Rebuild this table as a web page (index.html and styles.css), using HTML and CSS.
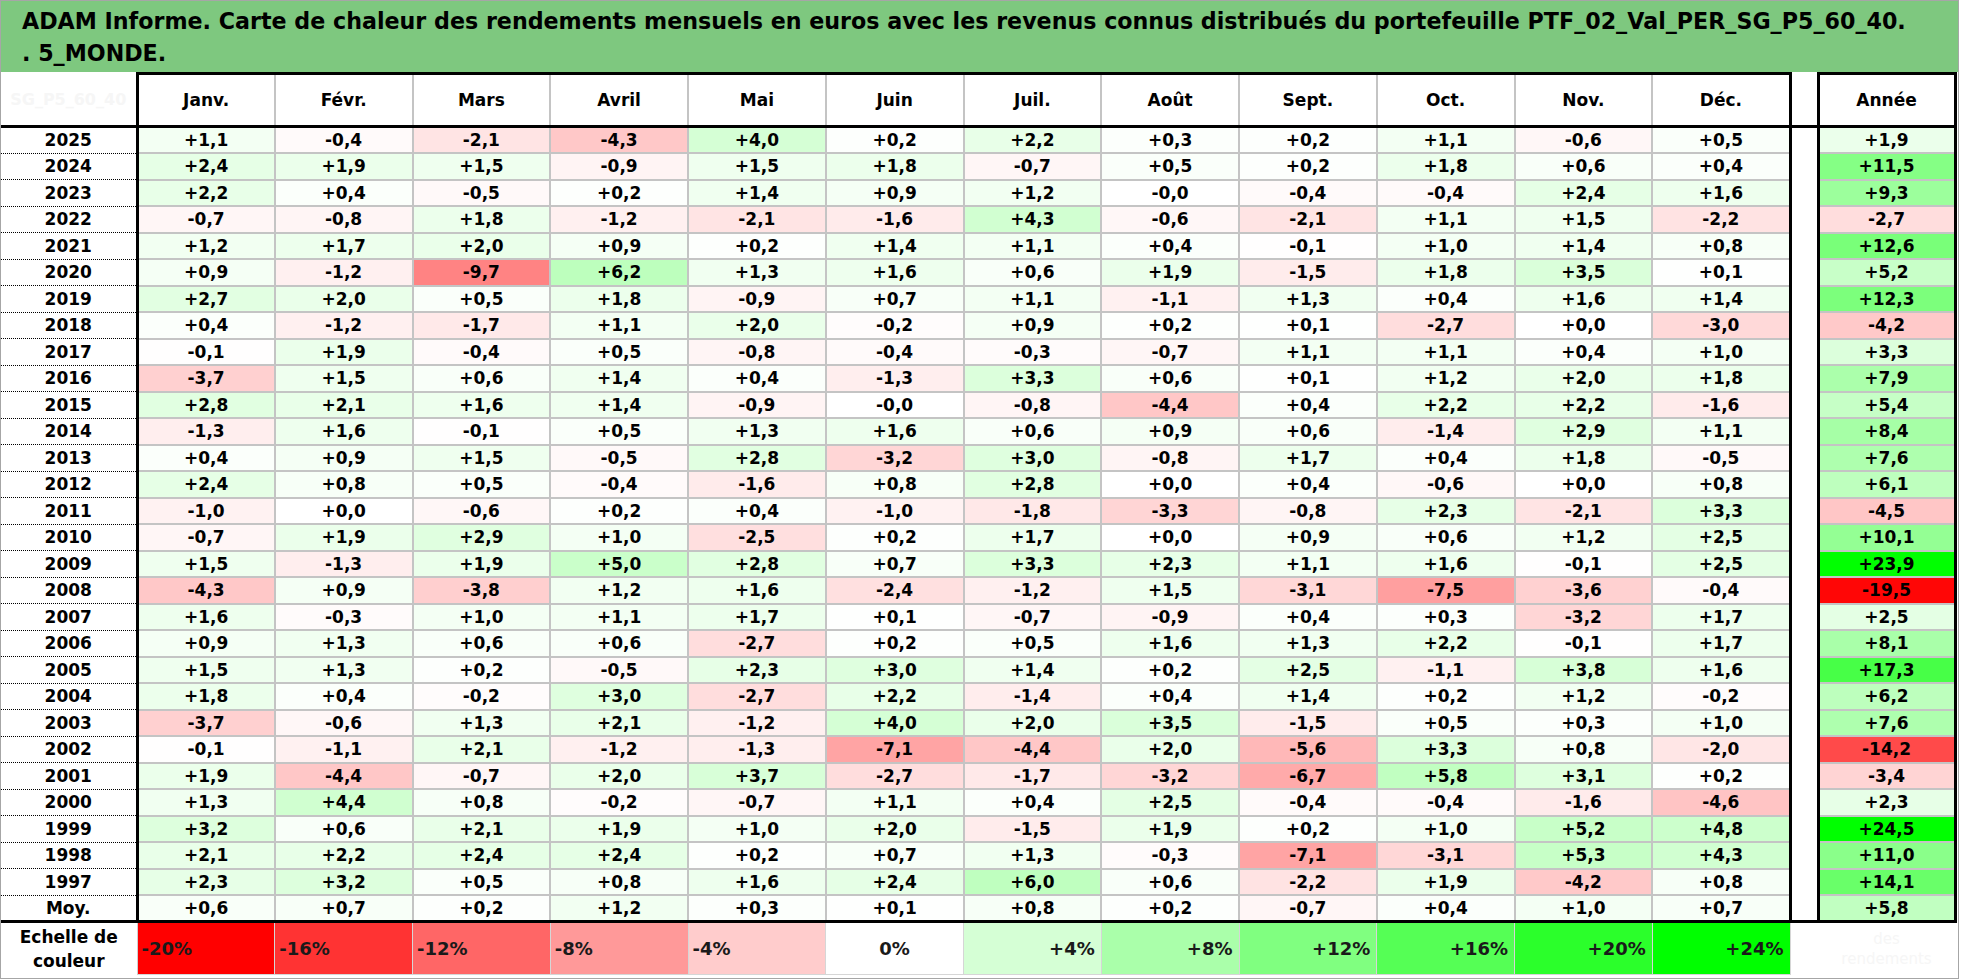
FILE: index.html
```html
<!DOCTYPE html>
<html lang="fr">
<head>
<meta charset="utf-8">
<title>ADAM Informe - Carte de chaleur</title>
<link rel="stylesheet" href="styles.css">
</head>
<body>
<div class="sheet">
  <div class="title">
    <div class="tline">ADAM Informe. Carte de chaleur des rendements mensuels en euros avec les revenus connus distribués du portefeuille PTF_02_Val_PER_SG_P5_60_40.</div>
    <div class="tline">. 5_MONDE.</div>
  </div>
  <table class="heat">
    <colgroup>
      <col class="c-year">
      <col class="c-m"><col class="c-m"><col class="c-m"><col class="c-m"><col class="c-m"><col class="c-m">
      <col class="c-m"><col class="c-m"><col class="c-m"><col class="c-m"><col class="c-m"><col class="c-m">
      <col class="c-gap">
      <col class="c-ann">
    </colgroup>
    <thead>
      <tr class="head">
        <th class="corner"><span class="ghost">SG_P5_60_40</span></th>
        <th class="mo">Janv.</th><th class="mo">Févr.</th><th class="mo">Mars</th><th class="mo">Avril</th>
        <th class="mo">Mai</th><th class="mo">Juin</th><th class="mo">Juil.</th><th class="mo">Août</th>
        <th class="mo">Sept.</th><th class="mo">Oct.</th><th class="mo">Nov.</th><th class="mo">Déc.</th>
        <th class="gap"></th>
        <th class="ann">Année</th>
      </tr>
    </thead>
    <tbody>
      <tr><th class="yr">2025</th><td class="v">+1,1</td><td class="v">-0,4</td><td class="v">-2,1</td><td class="v">-4,3</td><td class="v">+4,0</td><td class="v">+0,2</td><td class="v">+2,2</td><td class="v">+0,3</td><td class="v">+0,2</td><td class="v">+1,1</td><td class="v">-0,6</td><td class="v">+0,5</td><td class="gap"></td><td class="v ann">+1,9</td></tr>
      <tr><th class="yr">2024</th><td class="v">+2,4</td><td class="v">+1,9</td><td class="v">+1,5</td><td class="v">-0,9</td><td class="v">+1,5</td><td class="v">+1,8</td><td class="v">-0,7</td><td class="v">+0,5</td><td class="v">+0,2</td><td class="v">+1,8</td><td class="v">+0,6</td><td class="v">+0,4</td><td class="gap"></td><td class="v ann">+11,5</td></tr>
      <tr><th class="yr">2023</th><td class="v">+2,2</td><td class="v">+0,4</td><td class="v">-0,5</td><td class="v">+0,2</td><td class="v">+1,4</td><td class="v">+0,9</td><td class="v">+1,2</td><td class="v">-0,0</td><td class="v">-0,4</td><td class="v">-0,4</td><td class="v">+2,4</td><td class="v">+1,6</td><td class="gap"></td><td class="v ann">+9,3</td></tr>
      <tr><th class="yr">2022</th><td class="v">-0,7</td><td class="v">-0,8</td><td class="v">+1,8</td><td class="v">-1,2</td><td class="v">-2,1</td><td class="v">-1,6</td><td class="v">+4,3</td><td class="v">-0,6</td><td class="v">-2,1</td><td class="v">+1,1</td><td class="v">+1,5</td><td class="v">-2,2</td><td class="gap"></td><td class="v ann">-2,7</td></tr>
      <tr><th class="yr">2021</th><td class="v">+1,2</td><td class="v">+1,7</td><td class="v">+2,0</td><td class="v">+0,9</td><td class="v">+0,2</td><td class="v">+1,4</td><td class="v">+1,1</td><td class="v">+0,4</td><td class="v">-0,1</td><td class="v">+1,0</td><td class="v">+1,4</td><td class="v">+0,8</td><td class="gap"></td><td class="v ann">+12,6</td></tr>
      <tr><th class="yr">2020</th><td class="v">+0,9</td><td class="v">-1,2</td><td class="v">-9,7</td><td class="v">+6,2</td><td class="v">+1,3</td><td class="v">+1,6</td><td class="v">+0,6</td><td class="v">+1,9</td><td class="v">-1,5</td><td class="v">+1,8</td><td class="v">+3,5</td><td class="v">+0,1</td><td class="gap"></td><td class="v ann">+5,2</td></tr>
      <tr><th class="yr">2019</th><td class="v">+2,7</td><td class="v">+2,0</td><td class="v">+0,5</td><td class="v">+1,8</td><td class="v">-0,9</td><td class="v">+0,7</td><td class="v">+1,1</td><td class="v">-1,1</td><td class="v">+1,3</td><td class="v">+0,4</td><td class="v">+1,6</td><td class="v">+1,4</td><td class="gap"></td><td class="v ann">+12,3</td></tr>
      <tr><th class="yr">2018</th><td class="v">+0,4</td><td class="v">-1,2</td><td class="v">-1,7</td><td class="v">+1,1</td><td class="v">+2,0</td><td class="v">-0,2</td><td class="v">+0,9</td><td class="v">+0,2</td><td class="v">+0,1</td><td class="v">-2,7</td><td class="v">+0,0</td><td class="v">-3,0</td><td class="gap"></td><td class="v ann">-4,2</td></tr>
      <tr><th class="yr">2017</th><td class="v">-0,1</td><td class="v">+1,9</td><td class="v">-0,4</td><td class="v">+0,5</td><td class="v">-0,8</td><td class="v">-0,4</td><td class="v">-0,3</td><td class="v">-0,7</td><td class="v">+1,1</td><td class="v">+1,1</td><td class="v">+0,4</td><td class="v">+1,0</td><td class="gap"></td><td class="v ann">+3,3</td></tr>
      <tr><th class="yr">2016</th><td class="v">-3,7</td><td class="v">+1,5</td><td class="v">+0,6</td><td class="v">+1,4</td><td class="v">+0,4</td><td class="v">-1,3</td><td class="v">+3,3</td><td class="v">+0,6</td><td class="v">+0,1</td><td class="v">+1,2</td><td class="v">+2,0</td><td class="v">+1,8</td><td class="gap"></td><td class="v ann">+7,9</td></tr>
      <tr><th class="yr">2015</th><td class="v">+2,8</td><td class="v">+2,1</td><td class="v">+1,6</td><td class="v">+1,4</td><td class="v">-0,9</td><td class="v">-0,0</td><td class="v">-0,8</td><td class="v">-4,4</td><td class="v">+0,4</td><td class="v">+2,2</td><td class="v">+2,2</td><td class="v">-1,6</td><td class="gap"></td><td class="v ann">+5,4</td></tr>
      <tr><th class="yr">2014</th><td class="v">-1,3</td><td class="v">+1,6</td><td class="v">-0,1</td><td class="v">+0,5</td><td class="v">+1,3</td><td class="v">+1,6</td><td class="v">+0,6</td><td class="v">+0,9</td><td class="v">+0,6</td><td class="v">-1,4</td><td class="v">+2,9</td><td class="v">+1,1</td><td class="gap"></td><td class="v ann">+8,4</td></tr>
      <tr><th class="yr">2013</th><td class="v">+0,4</td><td class="v">+0,9</td><td class="v">+1,5</td><td class="v">-0,5</td><td class="v">+2,8</td><td class="v">-3,2</td><td class="v">+3,0</td><td class="v">-0,8</td><td class="v">+1,7</td><td class="v">+0,4</td><td class="v">+1,8</td><td class="v">-0,5</td><td class="gap"></td><td class="v ann">+7,6</td></tr>
      <tr><th class="yr">2012</th><td class="v">+2,4</td><td class="v">+0,8</td><td class="v">+0,5</td><td class="v">-0,4</td><td class="v">-1,6</td><td class="v">+0,8</td><td class="v">+2,8</td><td class="v">+0,0</td><td class="v">+0,4</td><td class="v">-0,6</td><td class="v">+0,0</td><td class="v">+0,8</td><td class="gap"></td><td class="v ann">+6,1</td></tr>
      <tr><th class="yr">2011</th><td class="v">-1,0</td><td class="v">+0,0</td><td class="v">-0,6</td><td class="v">+0,2</td><td class="v">+0,4</td><td class="v">-1,0</td><td class="v">-1,8</td><td class="v">-3,3</td><td class="v">-0,8</td><td class="v">+2,3</td><td class="v">-2,1</td><td class="v">+3,3</td><td class="gap"></td><td class="v ann">-4,5</td></tr>
      <tr><th class="yr">2010</th><td class="v">-0,7</td><td class="v">+1,9</td><td class="v">+2,9</td><td class="v">+1,0</td><td class="v">-2,5</td><td class="v">+0,2</td><td class="v">+1,7</td><td class="v">+0,0</td><td class="v">+0,9</td><td class="v">+0,6</td><td class="v">+1,2</td><td class="v">+2,5</td><td class="gap"></td><td class="v ann">+10,1</td></tr>
      <tr><th class="yr">2009</th><td class="v">+1,5</td><td class="v">-1,3</td><td class="v">+1,9</td><td class="v">+5,0</td><td class="v">+2,8</td><td class="v">+0,7</td><td class="v">+3,3</td><td class="v">+2,3</td><td class="v">+1,1</td><td class="v">+1,6</td><td class="v">-0,1</td><td class="v">+2,5</td><td class="gap"></td><td class="v ann">+23,9</td></tr>
      <tr><th class="yr">2008</th><td class="v">-4,3</td><td class="v">+0,9</td><td class="v">-3,8</td><td class="v">+1,2</td><td class="v">+1,6</td><td class="v">-2,4</td><td class="v">-1,2</td><td class="v">+1,5</td><td class="v">-3,1</td><td class="v">-7,5</td><td class="v">-3,6</td><td class="v">-0,4</td><td class="gap"></td><td class="v ann">-19,5</td></tr>
      <tr><th class="yr">2007</th><td class="v">+1,6</td><td class="v">-0,3</td><td class="v">+1,0</td><td class="v">+1,1</td><td class="v">+1,7</td><td class="v">+0,1</td><td class="v">-0,7</td><td class="v">-0,9</td><td class="v">+0,4</td><td class="v">+0,3</td><td class="v">-3,2</td><td class="v">+1,7</td><td class="gap"></td><td class="v ann">+2,5</td></tr>
      <tr><th class="yr">2006</th><td class="v">+0,9</td><td class="v">+1,3</td><td class="v">+0,6</td><td class="v">+0,6</td><td class="v">-2,7</td><td class="v">+0,2</td><td class="v">+0,5</td><td class="v">+1,6</td><td class="v">+1,3</td><td class="v">+2,2</td><td class="v">-0,1</td><td class="v">+1,7</td><td class="gap"></td><td class="v ann">+8,1</td></tr>
      <tr><th class="yr">2005</th><td class="v">+1,5</td><td class="v">+1,3</td><td class="v">+0,2</td><td class="v">-0,5</td><td class="v">+2,3</td><td class="v">+3,0</td><td class="v">+1,4</td><td class="v">+0,2</td><td class="v">+2,5</td><td class="v">-1,1</td><td class="v">+3,8</td><td class="v">+1,6</td><td class="gap"></td><td class="v ann">+17,3</td></tr>
      <tr><th class="yr">2004</th><td class="v">+1,8</td><td class="v">+0,4</td><td class="v">-0,2</td><td class="v">+3,0</td><td class="v">-2,7</td><td class="v">+2,2</td><td class="v">-1,4</td><td class="v">+0,4</td><td class="v">+1,4</td><td class="v">+0,2</td><td class="v">+1,2</td><td class="v">-0,2</td><td class="gap"></td><td class="v ann">+6,2</td></tr>
      <tr><th class="yr">2003</th><td class="v">-3,7</td><td class="v">-0,6</td><td class="v">+1,3</td><td class="v">+2,1</td><td class="v">-1,2</td><td class="v">+4,0</td><td class="v">+2,0</td><td class="v">+3,5</td><td class="v">-1,5</td><td class="v">+0,5</td><td class="v">+0,3</td><td class="v">+1,0</td><td class="gap"></td><td class="v ann">+7,6</td></tr>
      <tr><th class="yr">2002</th><td class="v">-0,1</td><td class="v">-1,1</td><td class="v">+2,1</td><td class="v">-1,2</td><td class="v">-1,3</td><td class="v">-7,1</td><td class="v">-4,4</td><td class="v">+2,0</td><td class="v">-5,6</td><td class="v">+3,3</td><td class="v">+0,8</td><td class="v">-2,0</td><td class="gap"></td><td class="v ann">-14,2</td></tr>
      <tr><th class="yr">2001</th><td class="v">+1,9</td><td class="v">-4,4</td><td class="v">-0,7</td><td class="v">+2,0</td><td class="v">+3,7</td><td class="v">-2,7</td><td class="v">-1,7</td><td class="v">-3,2</td><td class="v">-6,7</td><td class="v">+5,8</td><td class="v">+3,1</td><td class="v">+0,2</td><td class="gap"></td><td class="v ann">-3,4</td></tr>
      <tr><th class="yr">2000</th><td class="v">+1,3</td><td class="v">+4,4</td><td class="v">+0,8</td><td class="v">-0,2</td><td class="v">-0,7</td><td class="v">+1,1</td><td class="v">+0,4</td><td class="v">+2,5</td><td class="v">-0,4</td><td class="v">-0,4</td><td class="v">-1,6</td><td class="v">-4,6</td><td class="gap"></td><td class="v ann">+2,3</td></tr>
      <tr><th class="yr">1999</th><td class="v">+3,2</td><td class="v">+0,6</td><td class="v">+2,1</td><td class="v">+1,9</td><td class="v">+1,0</td><td class="v">+2,0</td><td class="v">-1,5</td><td class="v">+1,9</td><td class="v">+0,2</td><td class="v">+1,0</td><td class="v">+5,2</td><td class="v">+4,8</td><td class="gap"></td><td class="v ann">+24,5</td></tr>
      <tr><th class="yr">1998</th><td class="v">+2,1</td><td class="v">+2,2</td><td class="v">+2,4</td><td class="v">+2,4</td><td class="v">+0,2</td><td class="v">+0,7</td><td class="v">+1,3</td><td class="v">-0,3</td><td class="v">-7,1</td><td class="v">-3,1</td><td class="v">+5,3</td><td class="v">+4,3</td><td class="gap"></td><td class="v ann">+11,0</td></tr>
      <tr><th class="yr">1997</th><td class="v">+2,3</td><td class="v">+3,2</td><td class="v">+0,5</td><td class="v">+0,8</td><td class="v">+1,6</td><td class="v">+2,4</td><td class="v">+6,0</td><td class="v">+0,6</td><td class="v">-2,2</td><td class="v">+1,9</td><td class="v">-4,2</td><td class="v">+0,8</td><td class="gap"></td><td class="v ann">+14,1</td></tr>
      <tr class="moy"><th class="yr">Moy.</th><td class="v">+0,6</td><td class="v">+0,7</td><td class="v">+0,2</td><td class="v">+1,2</td><td class="v">+0,3</td><td class="v">+0,1</td><td class="v">+0,8</td><td class="v">+0,2</td><td class="v">-0,7</td><td class="v">+0,4</td><td class="v">+1,0</td><td class="v">+0,7</td><td class="gap"></td><td class="v ann">+5,8</td></tr>
      <tr class="scale">
        <th class="lbl">Echelle de<br>couleur</th>
        <td class="neg s-20">-20%</td><td class="neg s-16">-16%</td><td class="neg s-12">-12%</td><td class="neg s-8">-8%</td><td class="neg s-4">-4%</td>
        <td class="zero">0%</td>
        <td class="pos s4">+4%</td><td class="pos s8">+8%</td><td class="pos s12">+12%</td><td class="pos s16">+16%</td><td class="pos s20">+20%</td><td class="pos s24">+24%</td>
        <td class="sgap"></td>
        <td class="ghost2">des<br>rendements</td>
      </tr>
    </tbody>
  </table>
</div>
<script src="script.js"></script>
</body>
</html>
```

FILE: styles.css
```css
html, body {
  margin: 0;
  padding: 0;
  background: #ffffff;
}

body {
  font-family: "DejaVu Sans", "Liberation Sans", sans-serif;
  color: #000;
}

.sheet {
  width: 1957px;
  height: 977px;
  border: 1px solid #a6a6a6;
  overflow: hidden;
  background: #ffffff;
}

.title {
  height: 71px;
  box-sizing: border-box;
  padding: 4px 0 0 21px;
  background: #7ec87f;
  font-weight: bold;
  font-size: 22.2px;
  line-height: 32px;
  color: #000;
}

.tline {
  white-space: nowrap;
}

.heat {
  border-collapse: collapse;
  table-layout: fixed;
  width: 1954px;
}

.c-year { width: 136px; }
.c-m { width: 137.75px; }
.c-gap { width: 28px; }
.c-ann { width: 137px; }

.heat th,
.heat td {
  padding: 0;
  text-align: center;
  vertical-align: middle;
  font-weight: bold;
  font-size: 17px;
  color: #000;
  white-space: nowrap;
  overflow: hidden;
}

.heat tbody tr {
  height: 26.5px;
}

.heat tr.head {
  height: 53px;
}

.head .corner {
  border-bottom: 3px solid #000;
  border-right: 3px solid #000;
}

.ghost {
  color: #f6f6f6;
  font-size: 16px;
}

.head .mo {
  border-top: 3px solid #000;
  border-bottom: 3px solid #000;
  border-left: 2px solid #c4c4c4;
  border-right: 2px solid #c4c4c4;
}

.head .gap {
  border-bottom: 3px solid #000;
  border-left: 3px solid #000;
}

.head .ann {
  border: 3px solid #000;
}

th.yr {
  border-bottom: 1px dotted #000;
  border-right: 3px solid #000;
}

td.v {
  border: 2px solid #c4c4c4;
}

td.gap {
  border-left: 3px solid #000;
}

.heat td.ann {
  border-left: 3px solid #000;
  border-right: 3px solid #000;
}

.heat tr.moy th,
.heat tr.moy td {
  border-bottom: 3px solid #000;
}

.heat tr.scale {
  height: 53px;
}

.scale .lbl {
  line-height: 24px;
  border-right: 1px solid #cfcfcf;
}

.scale td {
  border: 1px solid #d6d6d6;
  font-size: 18px;
  color: #1a1a1a;
}

.scale .neg {
  text-align: left;
  padding-left: 4px;
}

.scale .pos {
  text-align: right;
  padding-right: 6px;
}

.scale .zero {
  background: #ffffff;
}

.scale .sgap {
  border: none;
}

.heat .scale .ghost2 {
  border: none;
  color: #f6f6f6;
  font-weight: normal;
  font-size: 15px;
  line-height: 20px;
}

.s-20 { background: #ff0000; }
.s-16 { background: #ff3333; }
.s-12 { background: #ff6666; }
.s-8  { background: #ff9999; }
.s-4  { background: #ffcccc; }
.s4   { background: #d5ffd5; }
.s8   { background: #aaffaa; }
.s12  { background: #80ff80; }
.s16  { background: #55ff55; }
.s20  { background: #2bff2b; }
.s24  { background: #00ff00; }
```

FILE: script.js
```js
(function () {
  function heat(v) {
    var t, c;
    if (v < 0) {
      t = Math.min(1, -v / 20);
      c = Math.round(255 * (1 - t));
      return 'rgb(255,' + c + ',' + c + ')';
    }
    t = Math.min(1, v / 24);
    c = Math.round(255 * (1 - t));
    return 'rgb(' + c + ',255,' + c + ')';
  }
  var cells = document.querySelectorAll('td.v');
  for (var i = 0; i < cells.length; i++) {
    var txt = cells[i].textContent.replace(',', '.').replace('+', '');
    var v = parseFloat(txt);
    if (!isNaN(v)) {
      cells[i].style.backgroundColor = heat(v);
    }
  }
})();
```
